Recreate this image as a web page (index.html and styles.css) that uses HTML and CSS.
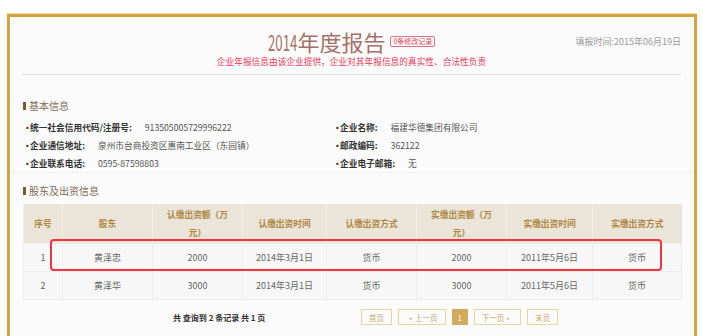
FILE: index.html
```html
<!DOCTYPE html>
<html>
	<head>
		<title>2014年度报告</title>
		<meta charset="utf-8">
		<link rel="stylesheet" href="styles.css">
	</head>

	<body>
		<div class="report">
			<div class="report-head">
				<div class="head-main">
					<h1><span class="year">2014</span>年度报告<span class="badge">0条修改记录</span></h1>
					<p class="notice">企业年报信息由该企业提供，企业对其年报信息的真实性、合法性负责</p>
				</div>
				<div class="fill-date">填报时间:2015年06月19日</div>
			</div>

			<h2 class="section-title">基本信息</h2>
			<div class="info-grid">
				<div class="info-item"><span class="label">统一社会信用代码/注册号:</span><span class="value">913505005729996222</span></div>
				<div class="info-item"><span class="label">企业名称:</span><span class="value">福建华德集团有限公司</span></div>
				<div class="info-item"><span class="label">企业通信地址:</span><span class="value">泉州市台商投资区惠南工业区（东园镇）</span></div>
				<div class="info-item"><span class="label">邮政编码:</span><span class="value">362122</span></div>
				<div class="info-item"><span class="label">企业联系电话:</span><span class="value">0595-87598803</span></div>
				<div class="info-item"><span class="label">企业电子邮箱:</span><span class="value">无</span></div>
			</div>

			<h2 class="section-title">股东及出资信息</h2>
			<div class="table-wrap">
				<table class="holders">
					<colgroup>
						<col class="w39"><col class="w90"><col class="w90"><col class="w84">
						<col class="w90"><col class="w90"><col class="w86"><col class="w89">
					</colgroup>
					<thead>
						<tr>
							<th>序号</th>
							<th>股东</th>
							<th>认缴出资额（万元）</th>
							<th>认缴出资时间</th>
							<th>认缴出资方式</th>
							<th>实缴出资额（万元）</th>
							<th>实缴出资时间</th>
							<th>实缴出资方式</th>
						</tr>
					</thead>
					<tbody>
						<tr>
							<td>1</td>
							<td>黄泽忠</td>
							<td>2000</td>
							<td>2014年3月1日</td>
							<td>货币</td>
							<td>2000</td>
							<td>2011年5月6日</td>
							<td>货币</td>
						</tr>
						<tr>
							<td>2</td>
							<td>黄泽华</td>
							<td>3000</td>
							<td>2014年3月1日</td>
							<td>货币</td>
							<td>3000</td>
							<td>2011年5月6日</td>
							<td>货币</td>
						</tr>
					</tbody>
				</table>
				<div class="highlight"></div>
			</div>

			<div class="pager">
				<span class="pager-info">共 查询到 2 条记录 共 1 页</span>
				<a class="page-btn">首页</a>
				<a class="page-btn"><span class="arrow">◂</span>上一页</a>
				<a class="page-btn current">1</a>
				<a class="page-btn">下一页<span class="arrow">▸</span></a>
				<a class="page-btn">末页</a>
			</div>
		</div>
	</body>
</html>
```

FILE: styles.css
```css
html,body {
	margin: 0;
	padding: 0;
	background-color: #fff;
	overflow: hidden;
}

body {
	font-family: "Noto Sans CJK SC", "Noto Sans", sans-serif;
	color: #555;
}

.report {
	margin: 14px 0 0 7px;
	width: 659px;
	min-height: 320px;
	padding: 0 13px 0 12px;
	border: 3px solid #d4a23e;
	border-bottom: 0;
	box-shadow: 0 -1px 0 #efdcb4;
	background-color: #fbfbfb;
}

/* header */
.report-head {
	display: grid;
	grid-template-columns: 1fr auto 1fr;
	padding: 11px 0 6px;
	border-bottom: 1px solid #dedede;
}

.head-main {
	grid-column: 2;
	text-align: center;
}

h1 {
	margin: 0;
	font-size: 22px;
	line-height: 26px;
	font-weight: normal;
	color: #a5716b;
	white-space: nowrap;
}

.year {
	display: inline-block;
	transform: scaleX(.6);
	transform-origin: left center;
	margin-right: -19px;
}

.badge {
	display: inline-block;
	margin-left: 5px;
	padding: 0 2px;
	border: 1px solid #e3707c;
	border-radius: 2px;
	font-size: 7px;
	line-height: 9px;
	color: #d9465a;
	vertical-align: 7px;
}

.notice {
	margin: 2px 0 0;
	font-size: 8.7px;
	line-height: 12px;
	color: #e6395a;
}

.fill-date {
	grid-column: 3;
	justify-self: end;
	margin-top: 7px;
	font-size: 9px;
	line-height: 14px;
	color: #9a9a9a;
}

/* sections */
.section-title {
	margin: 24px 0 5px;
	font-size: 10px;
	line-height: 14px;
	font-weight: normal;
	color: #7e6a58;
	display: flex;
	align-items: center;
}

.section-title::before {
	content: "";
	width: 3px;
	height: 8px;
	margin: 0 3px 0 1px;
	background-color: #7a5a2e;
}

.info-grid {
	display: grid;
	grid-template-columns: 310px 1fr;
	grid-auto-rows: 18px;
	margin: 0 -13px 0 -12px;
	padding: 0 13px 0 12px;
	border-bottom: 1px solid #f0f0f0;
}

.info-item {
	display: flex;
	align-items: center;
	font-size: 8.7px;
	white-space: nowrap;
}

.info-item::before {
	content: "·";
	width: 7px;
	padding-left: 1px;
	color: #333;
	font-weight: bold;
}

.label {
	font-weight: bold;
	color: #333;
	margin-right: 13px;
}

.value {
	color: #555;
}

.info-grid + .section-title {
	margin-top: 11px;
	margin-bottom: 6px;
}

/* table */
.table-wrap {
	position: relative;
	margin-left: 1px;
}

.holders {
	width: 658px;
	table-layout: fixed;
	border-collapse: collapse;
	text-align: center;
}

.w39 { width: 39px; }
.w84 { width: 84px; }
.w86 { width: 86px; }
.w89 { width: 89px; }
.w90 { width: 90px; }

.holders th {
	height: 39px;
	padding: 0 8px;
	background-color: #ebe4d8;
	border-left: 1px solid #f3eee6;
	font-size: 8.7px;
	line-height: 18px;
	font-weight: bold;
	color: #ad8641;
}

.holders td {
	height: 27px;
	padding: 0;
	background-color: #f7f7f7;
	border: 1px solid #ededed;
	font-size: 9px;
	color: #666;
}

.highlight {
	position: absolute;
	left: 27px;
	top: 35px;
	width: 608px;
	height: 28px;
	border: 2px solid #f0353f;
	border-radius: 4px;
}

/* pager */
.pager {
	display: flex;
	align-items: center;
	gap: 6px;
	margin-top: 9px;
	font-size: 7.5px;
}

.pager-info {
	width: 182px;
	margin-left: 151px;
	font-weight: bold;
	color: #333;
	font-size: 8px;
}

.page-btn {
	display: flex;
	align-items: center;
	justify-content: center;
	height: 14px;
	padding: 0 7px;
	border: 1px solid #e6d3a6;
	color: #c8a86e;
	white-space: nowrap;
}

.page-btn.current {
	padding: 0 5px;
	background-color: #d2aa5c;
	border-color: #d2aa5c;
	color: #fff;
}

.arrow {
	font-size: 5px;
	margin: 0 3px;
}
```
